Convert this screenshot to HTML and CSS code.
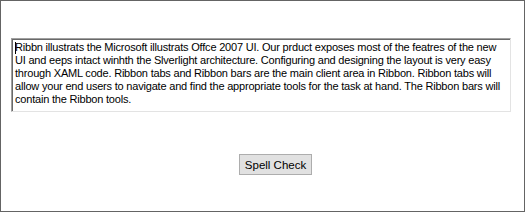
FILE: index.html
```html
<!DOCTYPE html>
<html lang="en">
<head>
    <meta charset="UTF-8">
    <title>Spell Check</title>
    <link rel="stylesheet" href="styles.css">
</head>
<body>

    <!-- Window client area -->
    <div class="window">

        <!-- Text box -->
        <div class="text-box">
            <span class="caret"></span>Ribbn illustrats the Microsoft illustrats Offce 2007 UI. Our prduct exposes most of the featres of the new<br>
            UI and eeps intact winhth the Slverlight architecture. Configuring and designing the layout is very easy<br>
            through XAML code. Ribbon tabs and Ribbon bars are the main client area in Ribbon. Ribbon tabs will<br>
            allow your end users to navigate and find the appropriate tools for the task at hand. The Ribbon bars will<br>
            contain the Ribbon tools.
        </div>

        <!-- Button row -->
        <div class="button-row">
            <button class="spell-btn">Spell Check</button>
        </div>

    </div>

</body>
</html>
```

FILE: styles.css
```css
/* Global */
body {
    margin: 0;
    background: #fff;
    font-family: 'Liberation Sans', Arial, sans-serif;
    font-size: 11px;
    color: #000;
}
/* Outer window frame */
.window {
    width: 525px;
    height: 212px;
    border: 1px solid #646464;
    padding: 37px 0 0 10px;
    box-sizing: border-box;
}
/* Text box with sunken border */
.text-box {
    position: relative;
    width: 500px;
    height: 74px;
    box-sizing: border-box;
    border-top: 1px solid #a0a0a0;
    border-left: 1px solid #a0a0a0;
    border-right: 1px solid #e3e3e3;
    border-bottom: 1px solid #e3e3e3;
    box-shadow: inset 1px 1px 0 #696969;
    padding: 2px 0 0 3px;
    line-height: 13px;
    letter-spacing: -0.2px;
    white-space: nowrap;
    overflow: hidden;
}
.caret {
    position: absolute;
    left: 3px;
    top: 3px;
    width: 1px;
    height: 12px;
    background: #000;
}
/* Spell check button */
.button-row {
    display: flex;
    padding: 42px 0 0 228px;
}
.spell-btn {
    width: 73px;
    height: 21px;
    padding: 0;
    background: #e1e1e1;
    border: 1px solid #adadad;
    font-family: 'Liberation Sans', Arial, sans-serif;
    font-size: 11.5px;
    color: #000;
}
```
